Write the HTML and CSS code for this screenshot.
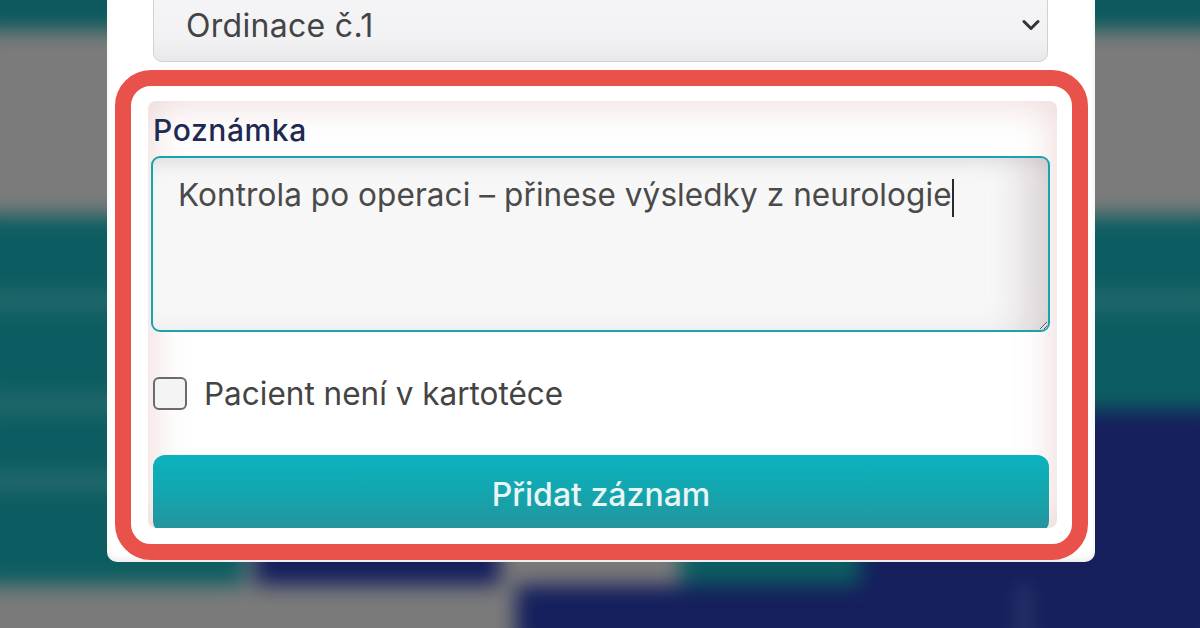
FILE: index.html
```html
<!DOCTYPE html>
<html lang="cs">
<head>
    <meta charset="UTF-8">
    <meta name="viewport" content="width=device-width, initial-scale=1.0">
    <title>Nový záznam</title>
    <link rel="stylesheet" href="styles.css">
</head>
<body>
    <!-- rozmazaný rozvrh v pozadí -->
    <div class="backdrop">
        <div class="band band-top"></div>
        <div class="band band-gray"></div>
        <div class="band band-teal">
            <div class="rule rule-1"></div>
        </div>
        <div class="band band-mixed">
            <div class="cell teal first"><div class="rule rule-2"></div><div class="rule rule-3"></div></div>
            <div class="cell gray gap"></div>
            <div class="cell navy second"></div>
            <div class="cell gray"></div>
            <div class="cell teal"></div>
            <div class="cell navy grow"></div>
        </div>
        <div class="band band-bottom">
            <div class="cell gray half"></div>
            <div class="cell navy grow"><div class="vline"></div></div>
        </div>
    </div>

    <div class="modal">
        <div class="select-wrap">
            <select class="field-select" name="ordinace">
                <option>Ordinace č.1</option>
                <option>Ordinace č.2</option>
            </select>
            <svg class="chevron" width="18" height="12" viewBox="0 0 18 12">
                <path d="M2 2.5l7 7 7-7" fill="none" stroke="#333" stroke-width="3" stroke-linecap="round" stroke-linejoin="round"/>
            </svg>
        </div>

        <div class="highlight">
            <div class="focus">
                <label class="field-label" for="note">Poznámka</label>
                <div class="note-wrap">
                    <textarea id="note" class="field-note">Kontrola po operaci – přinese výsledky z neurologie</textarea>
                    <span class="caret"></span>
                </div>

                <label class="check-row">
                    <input type="checkbox" class="check">
                    <span>Pacient není v kartotéce</span>
                </label>

                <button class="btn-add" type="button">Přidat záznam</button>
            </div>
        </div>
    </div>
</body>
</html>
```

FILE: styles.css
```css
/* zakladni */
body {
    margin: 0;
    width: 1200px;
    height: 628px;
    overflow: hidden;
    background: #7a7a7a;
    font-family: Inter, "Noto Sans", sans-serif;
}

/* pozadi */
.backdrop {
    position: fixed;
    top: -20px;
    left: -20px;
    right: -20px;
    bottom: -20px;
    display: flex;
    flex-direction: column;
    filter: blur(10px);
}
.band {
    display: flex;
    position: relative;
}
.band-top {
    height: 50px;
    background: #0b5a5e;
}
.band-gray {
    height: 185px;
    background: #7b7b7b;
}
.band-teal {
    height: 195px;
    background: #0c5d61;
}
.band-mixed {
    height: 175px;
    background: #7a7a7a;
}
.band-bottom {
    flex: 1;
    gap: 4px;
    background: #7a7a7a;
}
.cell {
    position: relative;
    width: 180px;
}
.cell.first {
    width: 265px;
}
.cell.gap {
    width: 10px;
}
.cell.second {
    width: 245px;
}
.cell.half {
    width: 532px;
}
.cell.grow {
    flex: 1;
}
.teal {
    background: #0c5d61;
}
.navy {
    background: #151f5c;
}
.gray {
    background: #7a7a7a;
}
.rule {
    position: absolute;
    left: 0;
    right: 0;
    height: 8px;
    background: rgba(160, 170, 170, 0.35);
}
.rule-1 {
    top: 82px;
}
.rule-2 {
    top: -10px;
}
.rule-3 {
    top: 67px;
}
.vline {
    position: absolute;
    left: 505px;
    top: 0;
    bottom: 0;
    width: 6px;
    background: rgba(150, 150, 170, 0.4);
}

/* okno formulare */
.modal {
    position: absolute;
    left: 107px;
    top: -12px;
    width: 973px;
    padding: 0 7px 2px 8px;
    background: #fff;
    border-radius: 10px;
    box-shadow: inset 0 -3px 6px rgba(0, 0, 0, 0.08);
}
.select-wrap {
    position: relative;
    margin: 0 40px 8px 38px;
}
.field-select {
    display: block;
    width: 100%;
    height: 74px;
    padding: 0 60px 0 32px;
    border: 1px solid #cdd3d3;
    border-radius: 9px;
    background: linear-gradient(180deg, #f5f5f7 0%, #f2f2f4 70%, #e8e8eb 100%);
    appearance: none;
    font-family: inherit;
    font-size: 32px;
    letter-spacing: 0.3px;
    color: #444;
}
.chevron {
    position: absolute;
    right: 8px;
    top: 31px;
}

/* cerveny ramecek */
.highlight {
    border: 16px solid #e8524a;
    border-radius: 36px;
    padding: 15px 15px 16px 17px;
    background: #fff;
}
.focus {
    height: 427px;
    padding: 0 8px 0 5px;
    border-radius: 8px;
    overflow: hidden;
    box-shadow: inset 0 0 40px rgba(200, 130, 130, 0.35);
}
.field-label {
    display: block;
    padding-top: 9px;
    margin-bottom: 6px;
    line-height: 40px;
    font-size: 30px;
    font-weight: 500;
    letter-spacing: 0.6px;
    color: #1e2a52;
}
.note-wrap {
    position: relative;
    margin: 0 -1px 0 -2px;
}
.field-note {
    display: block;
    box-sizing: border-box;
    width: 899px;
    height: 176px;
    padding: 17px 20px 0 25px;
    border: 2px solid #18a4aa;
    border-radius: 9px;
    outline: none;
    background: #f7f7f8;
    box-shadow: inset -40px 0 40px -20px rgba(170, 150, 155, 0.4), inset 0 14px 20px -14px rgba(150, 150, 160, 0.3);
    font-family: inherit;
    font-size: 31.5px;
    letter-spacing: 0.08px;
    line-height: 40px;
    color: #4a4a4a;
}
/* kurzor za textem */
.caret {
    position: absolute;
    left: 801px;
    top: 23px;
    width: 2px;
    height: 38px;
    background: #2a2a2a;
}
.check-row {
    display: flex;
    align-items: center;
    gap: 17px;
    margin-top: 45px;
    height: 33px;
    font-size: 31.5px;
    color: #444;
}
.check {
    appearance: none;
    box-sizing: border-box;
    width: 34px;
    height: 33px;
    margin: 0;
    border: 2px solid #6b6b6b;
    border-radius: 6px;
    background: #f4f4f4;
}
.btn-add {
    display: block;
    width: 896px;
    height: 78px;
    margin-top: 45px;
    padding: 0;
    border: none;
    border-radius: 12px;
    background: linear-gradient(180deg, #0ab3be 0%, #14a5ae 50%, #28929a 100%);
    font-family: inherit;
    font-size: 32px;
    font-weight: 500;
    color: #eaf5f5;
}
```
